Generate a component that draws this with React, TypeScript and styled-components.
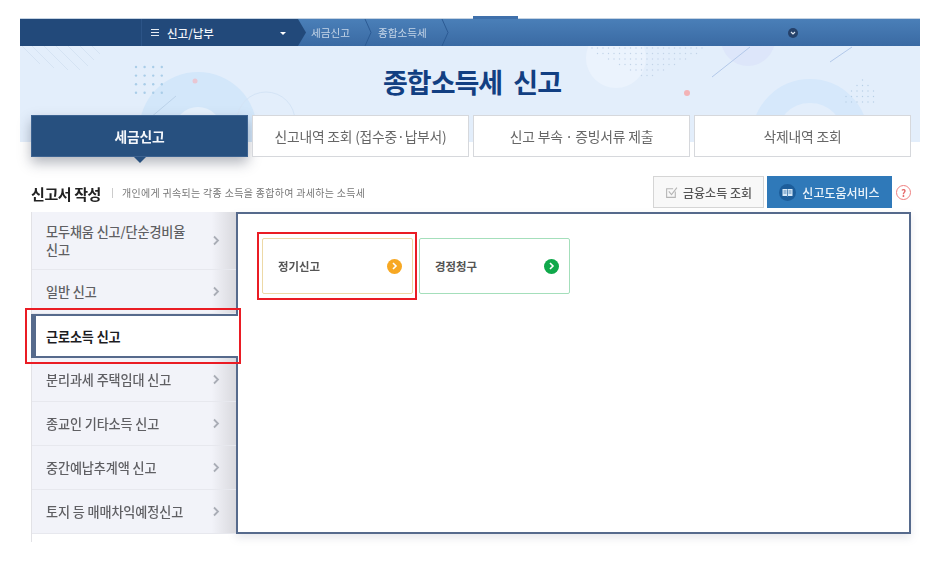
import styled, { createGlobalStyle } from "styled-components";

const GlobalStyle = createGlobalStyle`
  html, body {
    margin: 0;
    padding: 0;
    background: #fff;
    font-family: "Noto Sans CJK KR", "Noto Sans", sans-serif;
    color: #333;
  }
`;

const Page = styled.div`
  position: relative;
  width: 927px;
  height: 574px;
  overflow: hidden;
  padding-top: 18px;
  box-sizing: border-box;
  filter: blur(0.3px);
`;

const Top = styled.div`
  margin-left: 20px;
  width: 900px;
`;

const NavBar = styled.nav`
  position: relative;
  display: flex;
  height: 28px;
  box-sizing: border-box;
  border-top: 1px solid #c5d3e2;
  background: linear-gradient(#4a7fb8, #3a6aa3);

  &::before {
    content: "";
    position: absolute;
    left: 453px;
    top: -3px;
    width: 45px;
    height: 3px;
    background: #3f70ab;
  }
`;

const NavHome = styled.div`
  width: 121px;
  background: #22497a;
`;

const NavMenu = styled.div`
  position: relative;
  width: 157px;
  padding-left: 9px;
  box-sizing: border-box;
  display: flex;
  align-items: center;
  gap: 8px;
  background: #22497a;
  border-left: 1px solid #2c5487;
  color: #f2f5f9;
  font-size: 11.5px;
  font-weight: 500;
  white-space: nowrap;
`;

const MenuLines = styled.span`
  width: 8px;
  height: 7px;
  border-top: 1px solid #e6ebf2;
  border-bottom: 1px solid #e6ebf2;
  position: relative;
  box-sizing: border-box;

  &::after {
    content: "";
    position: absolute;
    left: 0;
    right: 0;
    top: 2px;
    height: 1px;
    background: #e6ebf2;
  }
`;

const NavCaret = styled.span`
  position: absolute;
  right: 12px;
  top: 13px;
  border-left: 3px solid transparent;
  border-right: 3px solid transparent;
  border-top: 3px solid #fff;
`;

const NavArrow = styled.svg`
  width: 8px;
  height: 27px;
  margin-right: 5px;
  flex: none;
`;

const Crumb = styled.div<{ $w: number }>`
  width: ${(p) => p.$w}px;
  flex: none;
  display: flex;
  align-items: center;
  gap: 14px;
  font-size: 10.6px;
  color: #c6d6e8;
  white-space: nowrap;
`;

const CrumbSep = styled.svg`
  width: 8px;
  height: 27px;
  flex: none;
`;

const NavSpacer = styled.div`
  flex: 1;
`;

const NavToggle = styled.span`
  position: absolute;
  left: 768px;
  top: 9px;
  width: 10px;
  height: 10px;
  border-radius: 50%;
  background: #25416a;
  display: flex;
  align-items: center;
  justify-content: center;
`;

const Banner = styled.header`
  position: relative;
  height: 96px;
  background: #e3eefb;
`;

const BannerArt = styled.svg`
  position: absolute;
  left: 0;
  top: 0;
  width: 900px;
  height: 96px;
`;

const Title = styled.h1`
  position: relative;
  margin: 0;
  padding: 16px 0 0 4px;
  height: 53px;
  box-sizing: border-box;
  text-align: center;
  font-size: 27px;
  line-height: 39px;
  font-weight: 700;
  letter-spacing: -1px;
  word-spacing: 6px;
  color: #123f82;
  white-space: nowrap;
`;

const Tabs = styled.div`
  position: relative;
  display: flex;
  gap: 4px;
  padding: 16px 9px 0 11px;
`;

const Tab = styled.div<{ $active?: boolean }>`
  position: relative;
  flex: 1;
  height: 42px;
  box-sizing: border-box;
  display: flex;
  align-items: center;
  justify-content: center;
  font-size: 13.8px;
  letter-spacing: -0.2px;
  white-space: nowrap;
  color: ${(p) => (p.$active ? "#f4f7fb" : "#666")};
  font-weight: ${(p) => (p.$active ? 700 : 400)};
  background: ${(p) => (p.$active ? "#27507f" : "#fff")};
  border: 1px solid ${(p) => (p.$active ? "#3d6391" : "#d6d8dc")};
  box-shadow: ${(p) => (p.$active ? "0 6px 12px rgba(40,50,70,.35)" : "none")};

  &::after {
    content: ${(p) => (p.$active ? '""' : "none")};
    position: absolute;
    left: 102px;
    bottom: -7px;
    border-left: 6px solid transparent;
    border-right: 6px solid transparent;
    border-top: 6px solid #27507f;
  }
`;

const Heading = styled.div`
  display: flex;
  align-items: center;
  height: 36px;
  margin: 32px 16px 2px 31px;
`;

const HeadTitle = styled.h2`
  margin: 0;
  font-size: 15px;
  font-weight: 700;
  letter-spacing: -0.4px;
  color: #222;
  white-space: nowrap;
  position: relative;
  top: 1px;
`;

const HeadNote = styled.p`
  margin: 0 0 0 11px;
  padding-left: 9px;
  border-left: 1px solid #ccc;
  font-size: 10px;
  line-height: 10px;
  letter-spacing: 0.3px;
  color: #777;
  white-space: nowrap;
  position: relative;
  top: 1px;
`;

const HeadActions = styled.div`
  margin-left: auto;
  display: flex;
  align-items: center;
  gap: 3px;
`;

const GhostButton = styled.button`
  width: 111px;
  height: 32px;
  display: flex;
  align-items: center;
  justify-content: center;
  gap: 5px;
  padding: 0;
  background: #f8f8f8;
  border: 1px solid #d5d5d5;
  color: #555;
  font: 500 12px "Noto Sans CJK KR", sans-serif;
  white-space: nowrap;
`;

const HelpButton = styled.button`
  width: 125px;
  height: 32px;
  display: flex;
  align-items: center;
  justify-content: center;
  gap: 6px;
  padding: 0;
  background: #2f79b9;
  border: none;
  color: #eaf3fa;
  font: 500 12px "Noto Sans CJK KR", sans-serif;
  white-space: nowrap;
`;

const BookBadge = styled.span`
  width: 17px;
  height: 17px;
  border-radius: 50%;
  background: #1d5d9a;
  display: flex;
  align-items: center;
  justify-content: center;
`;

const Question = styled.span`
  width: 13px;
  height: 13px;
  margin-left: 1px;
  border-radius: 50%;
  border: 1.5px solid #ee7f7f;
  color: #e76a6a;
  font-size: 10px;
  font-weight: 700;
  line-height: 13px;
  text-align: center;
`;

const Body = styled.section`
  display: flex;
  margin-left: 31px;
  width: 880px;
`;

const Side = styled.ul`
  position: relative;
  z-index: 1;
  width: 205px;
  flex: none;
  height: 330px;
  margin: 0;
  padding: 0;
  list-style: none;
  border-left: 1px solid #e2e2e6;
  box-sizing: border-box;
`;

const SideItem = styled.li<{ $tall?: boolean }>`
  height: ${(p) => (p.$tall ? 58 : 44)}px;
  box-sizing: border-box;
  display: flex;
  align-items: center;
  justify-content: space-between;
  padding: 0 16px 0 14px;
  font-size: 13.1px;
  font-weight: 500;
  line-height: 18px;
  letter-spacing: -0.1px;
  color: #5f5f63;
  background: linear-gradient(90deg, #f2f3f9 88%, #d9d9de 100%);
  border-bottom: 1px solid #e7e8ee;
`;

const ActiveItem = styled.li`
  position: relative;
  z-index: 2;
  width: 207px;
  height: 44px;
  box-sizing: border-box;
  display: flex;
  align-items: center;
  padding-left: 10px;
  margin-left: -1px;
  font-size: 13.1px;
  font-weight: 700;
  letter-spacing: -0.1px;
  color: #1c1c1f;
  background: #fff;
  border-left: 5px solid #566a8c;
  border-top: 2px solid #566a8c;
  border-bottom: 2px solid #566a8c;
`;

const SideFoot = styled.li`
  height: 8px;
`;

const Chevron = styled.svg`
  width: 8px;
  height: 11px;
  flex: none;
`;

const Panel = styled.div`
  flex: none;
  width: 675px;
  height: 322px;
  box-sizing: border-box;
  display: flex;
  gap: 6px;
  align-items: flex-start;
  padding: 24px;
  background: #fff;
  border: 2px solid #566a8c;
  box-shadow: 0 4px 8px rgba(120, 130, 150, 0.18);
`;

const Card = styled.div<{ $line: string }>`
  width: 151px;
  height: 56px;
  box-sizing: border-box;
  display: flex;
  align-items: center;
  justify-content: space-between;
  padding: 0 10px 0 15px;
  border: 1.5px solid ${(p) => p.$line};
  border-radius: 2px;
  background: #fff;
  font-size: 11.4px;
  font-weight: 700;
  color: #555;
  white-space: nowrap;
`;

const Dot = styled.span<{ $fill: string }>`
  width: 15px;
  height: 15px;
  border-radius: 50%;
  background: ${(p) => p.$fill};
  display: flex;
  align-items: center;
  justify-content: center;
`;

const Marker = styled.div<{ $x: number; $y: number; $w: number; $h: number }>`
  position: absolute;
  z-index: 5;
  left: ${(p) => p.$x}px;
  top: ${(p) => p.$y}px;
  width: ${(p) => p.$w}px;
  height: ${(p) => p.$h}px;
  box-sizing: border-box;
  border: 2.5px solid #ea1c24;
`;

const sideItems = [
  { label: <>모두채움 신고/단순경비율<br />신고</>, tall: true },
  { label: "일반 신고" },
  { label: "근로소득 신고", active: true },
  { label: "분리과세 주택임대 신고" },
  { label: "종교인 기타소득 신고" },
  { label: "중간예납추계액 신고" },
  { label: "토지 등 매매차익예정신고" },
];

const Tick = () => (
  <svg width="7" height="8" viewBox="0 0 7 8">
    <path d="M2 1l3 3-3 3" fill="none" stroke="#fff" strokeWidth="1.6" />
  </svg>
);

const dots = (x: number, y: number, cols: number, rows: number, step: number, r: number, fill: string) => {
  const out = [];
  for (let i = 0; i < cols; i++) {
    for (let j = 0; j < rows; j++) {
      out.push(<circle key={`${x}-${i}-${j}`} cx={x + i * step} cy={y + j * step} r={r} fill={fill} />);
    }
  }
  return out;
};

const Art = () => (
  <BannerArt viewBox="0 0 900 96">
    <g stroke="#d5e3f3" strokeWidth="1">
      <path d="M2 0l18 18M12 0l22 22M24 0l24 24M36 0l24 24M48 0l20 20M60 0l14 14M72 0l8 8" />
    </g>
    <circle cx="178" cy="85" r="59" fill="#d3e7fa" />
    <circle cx="178" cy="85" r="24" fill="#e6f1fc" />
    {dots(116, 21, 4, 4, 8.6, 1.2, "#a9cde8")}
    <circle cx="175" cy="35" r="2.5" fill="#e9c6d2" />
    <circle cx="246" cy="75" r="29" fill="none" stroke="#d4e4f6" strokeWidth="1" />
    <path d="M130 72l26-22" stroke="#bcd3ea" strokeWidth="1" />
    <circle cx="596" cy="12" r="30" fill="#ebf3fd" />
    <g>
      {dots(572, 2, 21, 6, 5.5, 0.7, "#c2d3e8").filter((_, i) => {
        const col = Math.floor(i / 6);
        const row = i % 6;
        return Math.abs(col - 10) * 0.55 + row * 1.05 < 6.2;
      })}
    </g>
    <circle cx="728" cy="-7" r="27" fill="#dde6fa" />
    <path d="M692 31l38-30M810 16l22-15" stroke="#b3c9ea" strokeWidth="1" />
    <circle cx="667" cy="47" r="3" fill="#f3b3b6" />
    <circle cx="790" cy="91" r="46" fill="none" stroke="#d6e8fb" strokeWidth="24" />
    {dots(826, 34, 6, 5, 5.5, 0.7, "#b7cfe6").filter((_, i) => {
      const col = Math.floor(i / 5);
      const row = i % 5;
      return Math.abs(col - 3) <= row;
    })}
  </BannerArt>
);

export default function App() {
  return (
    <Page>
      <GlobalStyle />
      <Top>
        <NavBar>
          <NavHome />
          <NavMenu>
            <MenuLines />
            신고/납부
            <NavCaret />
          </NavMenu>
          <NavArrow viewBox="0 0 8 27">
            <path d="M0 0l8 13.5L0 27z" fill="#22497a" />
          </NavArrow>
          <Crumb $w={67}>
            세금신고
            <CrumbSep viewBox="0 0 8 27">
              <path d="M1 0l6 13.5L1 27" fill="none" stroke="#2c5a94" />
            </CrumbSep>
          </Crumb>
          <Crumb $w={90}>
            종합소득세
            <CrumbSep viewBox="0 0 8 27">
              <path d="M1 0l6 13.5L1 27" fill="none" stroke="#2c5a94" />
            </CrumbSep>
          </Crumb>
          <NavSpacer />
          <NavToggle>
            <svg width="6" height="5" viewBox="0 0 6 5">
              <path d="M1 1l2 2 2-2" fill="none" stroke="#dfe7f1" strokeWidth="1.2" />
            </svg>
          </NavToggle>
        </NavBar>
        <Banner>
          <Art />
          <Title>종합소득세 신고</Title>
          <Tabs>
            <Tab $active>세금신고</Tab>
            <Tab>신고내역 조회 (접수중·납부서)</Tab>
            <Tab>신고 부속{"\u2009"}·{"\u2009"}증빙서류 제출</Tab>
            <Tab>삭제내역 조회</Tab>
          </Tabs>
        </Banner>
      </Top>
      <Heading>
        <HeadTitle>신고서 작성</HeadTitle>
        <HeadNote>개인에게 귀속되는 각종 소득을 종합하여 과세하는 소득세</HeadNote>
        <HeadActions>
          <GhostButton>
            <svg width="13" height="13" viewBox="0 0 12 12">
              <path d="M9.5 5v5.5h-8v-8h6" fill="none" stroke="#b5b5b5" />
              <path d="M3.5 5l2.5 3 5-6.5" fill="none" stroke="#b5b5b5" />
            </svg>
            금융소득 조회
          </GhostButton>
          <HelpButton>
            <BookBadge>
              <svg width="11" height="9" viewBox="0 0 11 9">
                <path d="M.5 1h4.5l.5.5.5-.5h4.5v7H6l-.5.5L5 8H.5z" fill="#d8e9f7" />
                <path d="M5.5 1.5V8M1.5 3h3M1.5 5h3M6.5 3h3M6.5 5h3" stroke="#1d5d9a" strokeWidth=".7" />
              </svg>
            </BookBadge>
            신고도움서비스
          </HelpButton>
          <Question>?</Question>
        </HeadActions>
      </Heading>
      <Body>
        <Side>
          {sideItems.map((item, i) =>
            item.active ? (
              <ActiveItem key={i}>{item.label}</ActiveItem>
            ) : (
              <SideItem key={i} $tall={item.tall}>
                <span>{item.label}</span>
                <Chevron viewBox="0 0 8 11">
                  <path d="M2 1.5l4 4-4 4" fill="none" stroke="#a9adb6" strokeWidth="1.8" />
                </Chevron>
              </SideItem>
            )
          )}
          <SideFoot />
        </Side>
        <Panel>
          <Card $line="#edd9a6">
            정기신고
            <Dot $fill="#f7a823"><Tick /></Dot>
          </Card>
          <Card $line="#a4dfbb">
            경정청구
            <Dot $fill="#0fa84a"><Tick /></Dot>
          </Card>
        </Panel>
      </Body>
      <Marker $x={257} $y={232} $w={160} $h={68} />
      <Marker $x={25} $y={308} $w={216} $h={56} />
    </Page>
  );
}
